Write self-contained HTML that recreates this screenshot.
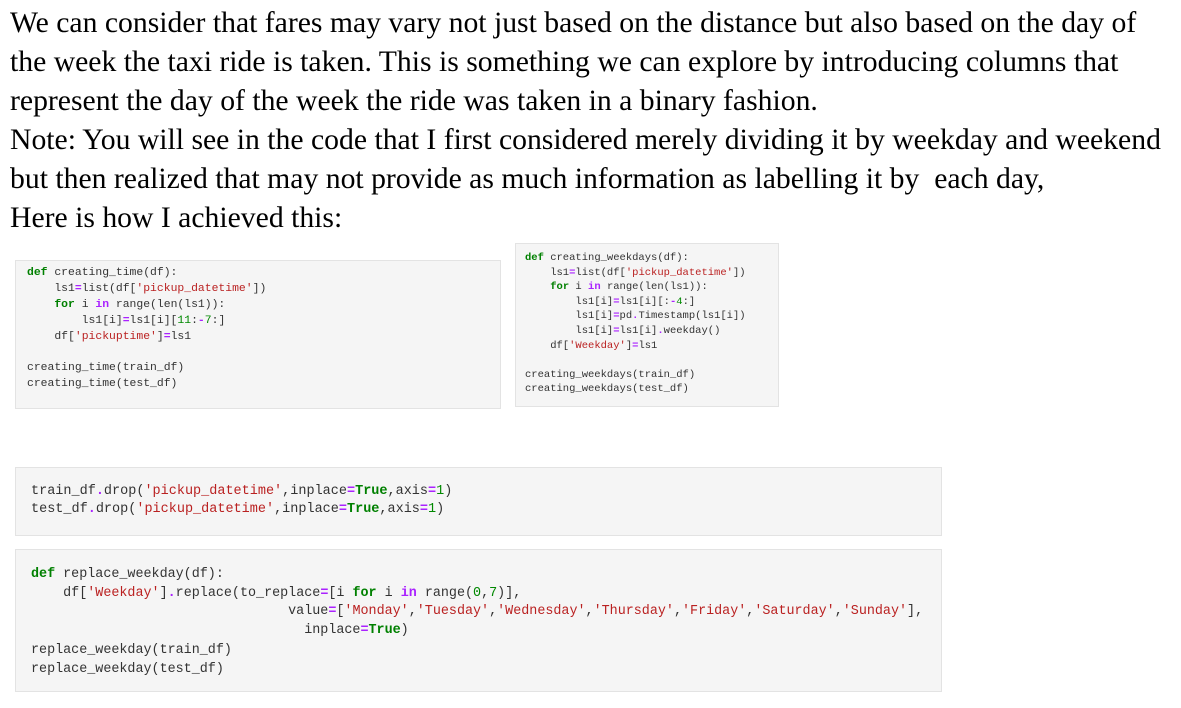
<html><head><style>
body{margin:0;width:1181px;height:708px;background:#fff;position:relative;overflow:hidden}
.t{position:absolute;left:10px;top:4px;font-family:"Liberation Serif",serif;font-size:29.7px;line-height:39px;color:#000;white-space:nowrap}
.b{position:absolute;background:#f5f5f5;border:1px solid #e3e3e3;box-sizing:border-box}
pre{margin:0;position:absolute;font-family:"Liberation Mono",monospace;color:#333}
.k{color:#008000;font-weight:bold}.s{color:#ba2121}.o{color:#aa22ff;font-weight:bold}.n{color:#080}
</style></head><body>
<div class="t">We can consider that fares may vary not just based on the distance but also based on the day of<br>the week the taxi ride is taken. This is something we can explore by introducing columns that<br>represent the day of the week the ride was taken in a binary fashion.<br>Note: You will see in the code that I first considered merely dividing it by weekday and weekend<br>but then realized that may not provide as much information as labelling it by&nbsp; each day,<br>Here is how I achieved this:</div>
<div class="b" style="left:15px;top:260px;width:486px;height:149px"></div>
<pre style="left:27px;top:266px;font-size:11.4px;line-height:15.9px"><span class="k">def</span> creating_time(df):
    ls1<span class="o">=</span>list(df[<span class="s">'pickup_datetime'</span>])
    <span class="k">for</span> i <span class="o">in</span> range(len(ls1)):
        ls1[i]<span class="o">=</span>ls1[i][<span class="n">11</span>:<span class="o">-</span><span class="n">7</span>:]
    df[<span class="s">'pickuptime'</span>]<span class="o">=</span>ls1

creating_time(train_df)
creating_time(test_df)</pre>
<div class="b" style="left:515px;top:243px;width:264px;height:164px"></div>
<pre style="left:525px;top:251px;font-size:10.5px;line-height:14.6px"><span class="k">def</span> creating_weekdays(df):
    ls1<span class="o">=</span>list(df[<span class="s">'pickup_datetime'</span>])
    <span class="k">for</span> i <span class="o">in</span> range(len(ls1)):
        ls1[i]<span class="o">=</span>ls1[i][:<span class="o">-</span><span class="n">4</span>:]
        ls1[i]<span class="o">=</span>pd<span class="o">.</span>Timestamp(ls1[i])
        ls1[i]<span class="o">=</span>ls1[i]<span class="o">.</span>weekday()
    df[<span class="s">'Weekday'</span>]<span class="o">=</span>ls1

creating_weekdays(train_df)
creating_weekdays(test_df)</pre>
<div class="b" style="left:15px;top:467px;width:927px;height:69px"></div>
<pre style="left:31px;top:483px;font-size:13.5px;line-height:18px">train_df<span class="o">.</span>drop(<span class="s">'pickup_datetime'</span>,inplace<span class="o">=</span><span class="k">True</span>,axis<span class="o">=</span><span class="n">1</span>)
test_df<span class="o">.</span>drop(<span class="s">'pickup_datetime'</span>,inplace<span class="o">=</span><span class="k">True</span>,axis<span class="o">=</span><span class="n">1</span>)</pre>
<div class="b" style="left:15px;top:549px;width:927px;height:143px"></div>
<pre style="left:31px;top:566px;font-size:13.4px;line-height:18.6px"><span class="k">def</span> replace_weekday(df):
    df[<span class="s">'Weekday'</span>]<span class="o">.</span>replace(to_replace<span class="o">=</span>[i <span class="k">for</span> i <span class="o">in</span> range(<span class="n">0</span>,<span class="n">7</span>)],
                                value<span class="o">=</span>[<span class="s">'Monday'</span>,<span class="s">'Tuesday'</span>,<span class="s">'Wednesday'</span>,<span class="s">'Thursday'</span>,<span class="s">'Friday'</span>,<span class="s">'Saturday'</span>,<span class="s">'Sunday'</span>],
                                  inplace<span class="o">=</span><span class="k">True</span>)
<span style="display:inline-block;margin-top:2px">replace_weekday(train_df)</span>
replace_weekday(test_df)</pre>
</body></html>
